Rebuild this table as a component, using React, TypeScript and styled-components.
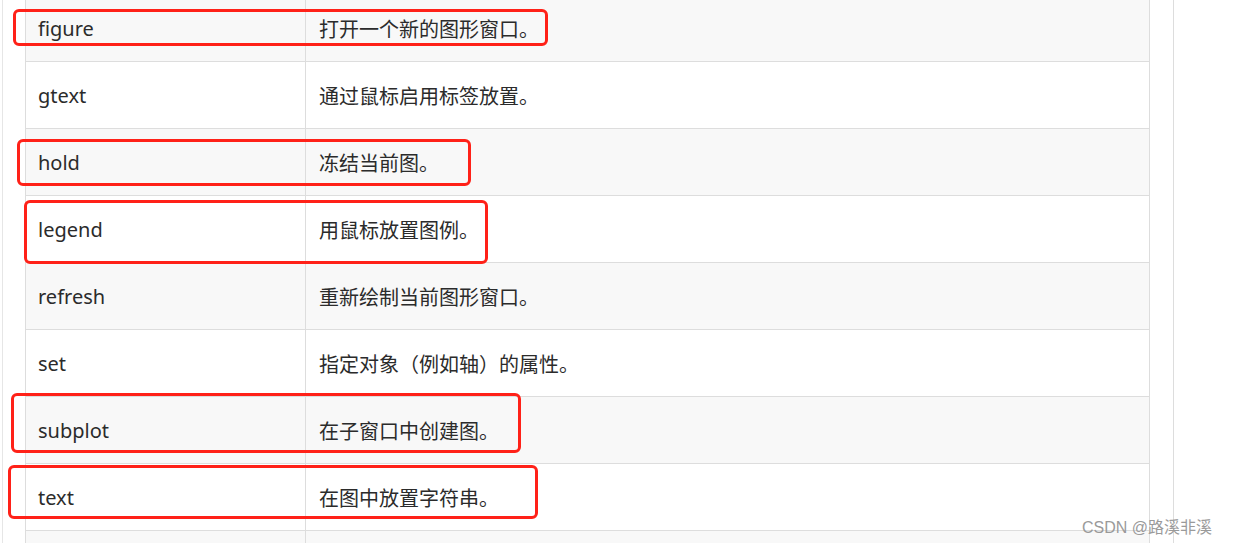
import React from 'react';
import styled, { createGlobalStyle } from 'styled-components';

const GlobalStyle = createGlobalStyle`
    html, body {
        margin: 0;
        padding: 0;
        background: #FFFFFF;
        overflow: hidden;
    }
`;

// --- Page frame ---

const Page = styled.div`
    position: relative;
    display: flex;
    width: 1234px;
    height: 543px;
    overflow: hidden;
    font-family: 'Noto Sans', 'Noto Sans CJK SC', sans-serif;
`;

const LeftRail = styled.div`
    margin-left: 2px;
    width: 22px;
    border-left: 1px solid #E6E6E6;
    flex-shrink: 0;
`;

const RightGap = styled.div`
    width: 23px;
    flex-shrink: 0;
`;

const RightRail = styled.div`
    flex: 1;
    border-left: 1px solid #DDDDDD;
`;

// --- Table ---

const Table = styled.div`
    width: 1123px;
    flex-shrink: 0;
    margin-top: -5px;
    border-left: 1px solid #DDDDDD;
    border-right: 1px solid #DDDDDD;
    align-self: flex-start;
`;

const Row = styled.div<{ striped: boolean }>`
    display: grid;
    grid-template-columns: 279px 1fr;
    height: 66px;
    border-bottom: 1px solid #DDDDDD;
    background: ${props => (props.striped ? '#F8F8F8' : '#FFFFFF')};
`;

const Cell = styled.div<{ divided?: boolean }>`
    display: flex;
    align-items: center;
    padding-left: ${props => (props.divided ? '13px' : '12px')};
    font-size: 20px;
    color: #2B2B2B;
    ${props => props.divided && 'border-left: 1px solid #DDDDDD;'}
`;

// --- Annotations drawn over the table ---

const Marker = styled.div`
    position: absolute;
    box-sizing: border-box;
    border: 3px solid #FF2118;
    border-radius: 6px;
    pointer-events: none;
`;

const Watermark = styled.div`
    position: absolute;
    left: 1082px;
    top: 514px;
    font-family: 'Liberation Sans', 'Noto Sans CJK SC', sans-serif;
    font-size: 16px;
    color: #9A9A9A;
    white-space: nowrap;
`;

const rows = [
    { name: 'figure', desc: '打开一个新的图形窗口。' },
    { name: 'gtext', desc: '通过鼠标启用标签放置。' },
    { name: 'hold', desc: '冻结当前图。' },
    { name: 'legend', desc: '用鼠标放置图例。' },
    { name: 'refresh', desc: '重新绘制当前图形窗口。' },
    { name: 'set', desc: '指定对象（例如轴）的属性。' },
    { name: 'subplot', desc: '在子窗口中创建图。' },
    { name: 'text', desc: '在图中放置字符串。' },
    { name: '', desc: '' },
];

const markers = [
    { left: 13, top: 9, width: 535, height: 37 },
    { left: 17, top: 139, width: 454, height: 47 },
    { left: 24, top: 200, width: 464, height: 64 },
    { left: 11, top: 393, width: 510, height: 60 },
    { left: 8, top: 465, width: 530, height: 54 },
];

const App: React.FC = () => {
    return (
        <>
            <GlobalStyle />
            <Page>
                <LeftRail />
                <Table>
                    {rows.map((row, i) => (
                        <Row key={i} striped={i % 2 === 0}>
                            <Cell>{row.name}</Cell>
                            <Cell divided>{row.desc}</Cell>
                        </Row>
                    ))}
                </Table>
                <RightGap />
                <RightRail />

                {markers.map((m, i) => (
                    <Marker
                        key={i}
                        style={{ left: m.left, top: m.top, width: m.width, height: m.height }}
                    />
                ))}
                <Watermark>CSDN @路溪非溪</Watermark>
            </Page>
        </>
    );
};

export default App;
